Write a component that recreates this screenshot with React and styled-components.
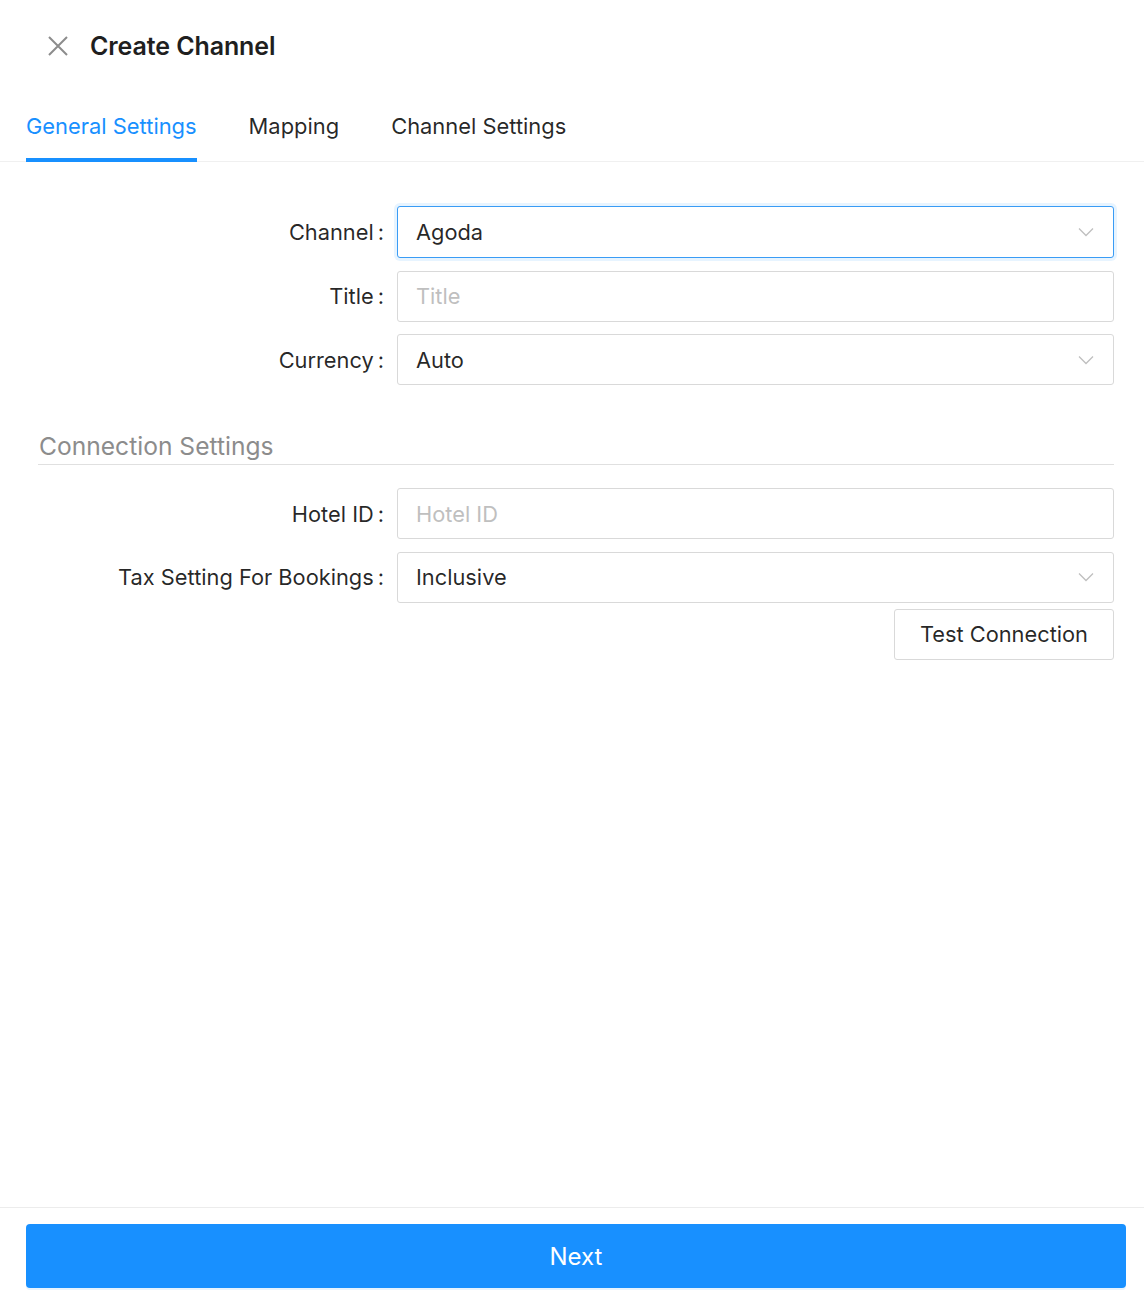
import React from "react";
import styled, { createGlobalStyle } from "styled-components";

const Global = createGlobalStyle`
  html, body { margin: 0; padding: 0; background: #fff; }
  body { font-family: Inter, "Noto Sans", "Liberation Sans", sans-serif; color: rgba(0,0,0,0.85); }
  * { box-sizing: border-box; }
`;

const Page = styled.div`
  min-height: 100vh;
  display: flex;
  flex-direction: column;
  background: #fff;
`;

const Header = styled.header`
  display: flex;
  align-items: center;
  gap: 22px;
  height: 92px;
  padding: 0 0 0 48px;
`;

const CloseButton = styled.button`
  border: 0;
  background: none;
  padding: 0;
  width: 20px;
  height: 20px;
  display: flex;
  color: #8c8c8c;
  cursor: pointer;
`;

const Title = styled.h1`
  margin: 0;
  font-size: 25px;
  font-weight: 600;
  color: #1f1f1f;
  letter-spacing: -0.1px;
`;

const TabBar = styled.nav`
  display: flex;
  gap: 52px;
  padding: 0 26px;
  border-bottom: 1px solid #f0f0f0;
  height: 70px;
`;

const Tab = styled.div`
  position: relative;
  display: flex;
  align-items: center;
  font-size: 21.9px;
  padding-bottom: 2px;
  color: ${(p) => (p.$active ? "#1890ff" : "rgba(0,0,0,0.85)")};
  &::after {
    content: "";
    position: absolute;
    left: 0;
    right: 0;
    bottom: -1px;
    height: 4px;
    background: ${(p) => (p.$active ? "#1890ff" : "transparent")};
  }
`;

const Body = styled.main`
  flex: 1;
  padding: 44px 30px 0 38px;
`;

const Form = styled.div`
  display: flex;
  flex-direction: column;
  gap: 12.5px;
`;

const Row = styled.div`
  display: grid;
  grid-template-columns: 346px 1fr;
  column-gap: 13px;
  align-items: center;
`;

const Label = styled.label`
  text-align: right;
  font-size: 21.8px;
  color: rgba(0,0,0,0.85);
  white-space: nowrap;
  &::after {
    content: ":";
    margin-left: 4px;
  }
`;

const Field = styled.div`
  height: ${(p) => (p.$focused ? 52 : 51)}px;
  border: 1px solid ${(p) => (p.$focused ? "#3a9cf5" : "#d9d9d9")};
  box-shadow: ${(p) => (p.$focused ? "0 0 0 3px rgba(24,144,255,0.1)" : "none")};
  border-radius: 3px;
  display: flex;
  align-items: center;
  padding: 0 19px 0 18px;
  font-size: 21.8px;
  color: ${(p) => (p.$placeholder ? "#bfbfbf" : "rgba(0,0,0,0.85)")};
  background: #fff;
`;

const FieldText = styled.span`
  flex: 1;
`;

const Chevron = styled.svg`
  width: 16px;
  height: 16px;
  color: #bfbfbf;
`;

const SectionTitle = styled.div`
  margin: 45px 0 23px;
  padding-bottom: 2px;
  border-bottom: 1px solid #e0e0e0;
  font-size: 24.6px;
  color: #8c8c8c;
  padding-left: 1px;
  line-height: 32px;
`;

const Actions = styled.div`
  display: flex;
  justify-content: flex-end;
  margin-top: -6.5px;
`;

const Button = styled.button`
  height: 51px;
  padding: 0 25px;
  border: 1px solid #d9d9d9;
  border-radius: 3px;
  background: #fff;
  font-family: inherit;
  font-size: 21.8px;
  color: rgba(0,0,0,0.85);
  cursor: pointer;
`;

const Footer = styled.footer`
  border-top: 1px solid #ececec;
  padding: 16px 18px 12px 26px;
`;

const PrimaryButton = styled.button`
  width: 100%;
  height: 64px;
  border: 0;
  border-radius: 4px;
  background: #1890ff;
  color: #fff;
  font-family: inherit;
  font-size: 24px;
  box-shadow: 0 2px 0 rgba(24,144,255,0.1);
  cursor: pointer;
`;

const ChevronIcon = () => (
  <Chevron viewBox="0 0 16 16" fill="none">
    <path d="M1 4.5 L8 11.5 L15 4.5" stroke="currentColor" strokeWidth="1.3" />
  </Chevron>
);

const SelectField = ({ value, focused }) => (
  <Field $focused={focused}>
    <FieldText>{value}</FieldText>
    <ChevronIcon />
  </Field>
);

const InputField = ({ placeholder }) => (
  <Field $placeholder>
    <FieldText>{placeholder}</FieldText>
  </Field>
);

export default function App() {
  return (
    <Page>
      <Global />
      <Header>
        <CloseButton aria-label="close">
          <svg viewBox="0 0 20 20" width="20" height="20" fill="none">
            <path d="M1 1 L19 19 M19 1 L1 19" stroke="currentColor" strokeWidth="2" />
          </svg>
        </CloseButton>
        <Title>Create Channel</Title>
      </Header>
      <TabBar>
        <Tab $active>General Settings</Tab>
        <Tab>Mapping</Tab>
        <Tab>Channel Settings</Tab>
      </TabBar>
      <Body>
        <Form>
          <Row>
            <Label>Channel</Label>
            <SelectField value="Agoda" focused />
          </Row>
          <Row>
            <Label>Title</Label>
            <InputField placeholder="Title" />
          </Row>
          <Row>
            <Label>Currency</Label>
            <SelectField value="Auto" />
          </Row>
        </Form>
        <SectionTitle>Connection Settings</SectionTitle>
        <Form>
          <Row>
            <Label>Hotel ID</Label>
            <InputField placeholder="Hotel ID" />
          </Row>
          <Row>
            <Label>Tax Setting For Bookings</Label>
            <SelectField value="Inclusive" />
          </Row>
          <Actions>
            <Button>Test Connection</Button>
          </Actions>
        </Form>
      </Body>
      <Footer>
        <PrimaryButton>Next</PrimaryButton>
      </Footer>
    </Page>
  );
}
